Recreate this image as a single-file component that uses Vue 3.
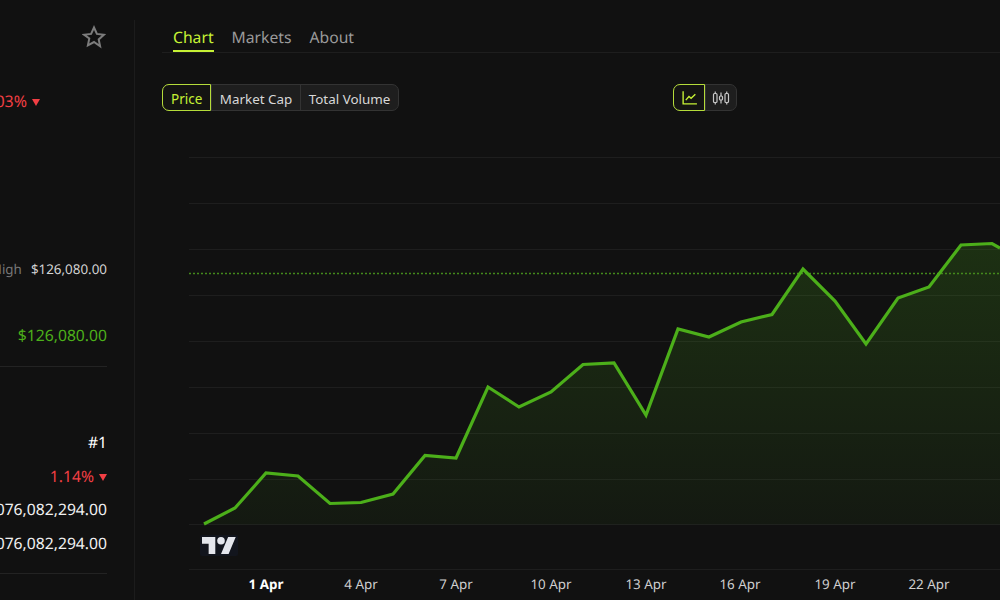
<template>
  <div class="page">
    <aside class="sidebar">
      <div class="star-row">
        <svg class="star" width="24" height="24" viewBox="0 0 24 24" fill="none" stroke="#7c7c7c" stroke-width="2" stroke-linejoin="miter">
          <path d="M12 2.500l2.900 6.400 7 .8-5.200 4.700 1.400 6.900L12 17l-6.100 3.300 1.400-6.900L2.100 9.700l7-.8z" />
        </svg>
      </div>
      <div class="change">-2.03%<span class="arrow"></span></div>
      <div class="stat high"><span class="dim">24h High</span><span>$126,080.00</span></div>
      <div class="ath">$126,080.00</div>
      <div class="divider first"></div>
      <div class="stat rank">#1</div>
      <div class="stat dominance">1.14%<span class="arrow"></span></div>
      <div class="stat cap">$2,076,082,294.00</div>
      <div class="stat cap second">$2,076,082,294.00</div>
      <div class="divider last"></div>
    </aside>

    <main class="main">
      <nav class="tabs">
        <a v-for="tab in tabs" :key="tab" class="tab" :class="{ active: tab === 'Chart' }">{{ tab }}</a>
      </nav>

      <div class="toolbar">
        <div class="group">
          <button v-for="m in metrics" :key="m" class="seg" :class="{ on: m === 'Price' }">{{ m }}</button>
        </div>
        <div class="group">
          <button class="seg icon on">
            <svg width="17" height="17" viewBox="0 0 16 16" fill="none" stroke="currentColor" stroke-width="1.300">
              <path d="M2 2v12h13" />
              <path d="M4.500 10.500l3-3.500 2 1.800 4-3.800" />
            </svg>
          </button>
          <button class="seg icon">
            <svg width="18" height="16" viewBox="0 0 18 16" fill="none" stroke="currentColor" stroke-width="1.200">
              <rect x="1.500" y="3.500" width="3.500" height="9" rx="1" />
              <path d="M3.250 1.500v2M3.250 12.500v2" />
              <rect x="7.500" y="6" width="3" height="4" rx="1" />
              <path d="M9 2.500V6M9 10v3.500" />
              <rect x="13" y="3.500" width="3.500" height="9" rx="1" />
              <path d="M14.750 1.500v2M14.750 12.500v2" />
            </svg>
          </button>
        </div>
      </div>

      <svg class="chart" viewBox="135 130 865 470" width="865" height="470">
        <defs>
          <linearGradient id="area" x1="0" y1="243" x2="0" y2="525" gradientUnits="userSpaceOnUse">
            <stop offset="0" stop-color="#4caf1a" stop-opacity="0.2" />
            <stop offset="1" stop-color="#4caf1a" stop-opacity="0.05" />
          </linearGradient>
        </defs>
        <line v-for="y in grid" :key="y" x1="189" x2="1000" :y1="y" :y2="y" class="grid" />
        <path :d="areaPath" fill="url(#area)" />
        <line x1="189" x2="1000" y1="273.500" y2="273.500" class="last-price" />
        <polyline :points="linePoints" class="line" />
        <rect x="200" y="535" width="38" height="21" rx="2" fill="#131722" opacity="0.7" />
        <g transform="translate(202 533.200) scale(0.950)" fill="#e4e6ec">
          <path d="M14 22H7V11H0V4h14v18zM28 22h-8l7.500-18h8L28 22z" />
          <circle cx="20" cy="8" r="4" />
        </g>
        <text v-for="t in ticks" :key="t.label" :x="t.x" y="588.500" text-anchor="middle" class="tick" :class="{ major: t.major }">{{ t.label }}</text>
      </svg>
    </main>
  </div>
</template>

<script setup>
const tabs = ['Chart', 'Markets', 'About']
const metrics = ['Price', 'Market Cap', 'Total Volume']

const grid = [157.5, 203.5, 249.5, 295.5, 341.5, 387.5, 433.5, 479.5, 524.5, 569.5]

const points = [
  [204, 524], [235, 508], [266, 473], [298, 476], [330, 503.5], [361, 502.5],
  [393, 494], [425, 455.5], [456, 458], [488, 387], [519, 407], [551, 392],
  [583, 364.5], [614, 363], [646, 415], [678, 329], [709, 337], [741, 322],
  [772, 314.5], [803, 269], [835, 301], [866, 344], [898, 298], [929, 287],
  [961, 245], [992, 243.5], [1000, 248],
]
const linePoints = points.map((p) => p.join(',')).join(' ')
const areaPath = `M204,524 L${linePoints.replaceAll(' ', ' L')} L1000,524.5 L204,524.5 Z`

const ticks = [
  { label: '1 Apr', x: 266, major: true },
  { label: '4 Apr', x: 361 },
  { label: '7 Apr', x: 456 },
  { label: '10 Apr', x: 551 },
  { label: '13 Apr', x: 646 },
  { label: '16 Apr', x: 740 },
  { label: '19 Apr', x: 835 },
  { label: '22 Apr', x: 929 },
]
</script>

<style>
html,
body {
  margin: 0;
  background: #111111;
}
</style>

<style scoped>
.page {
  display: flex;
  width: 1000px;
  height: 600px;
  overflow: hidden;
  background: #111111;
  color: #e6e6e6;
  font-family: "Noto Sans", sans-serif;
  text-rendering: geometricPrecision;
}

.sidebar {
  position: relative;
  display: flex;
  flex-direction: column;
  align-items: flex-end;
  flex: 0 0 135px;
  width: 135px;
  box-sizing: border-box;
  margin-top: 20px;
  padding-right: 27px;
  border-right: 1px solid #1c1c1c;
  white-space: nowrap;
}

.star-row {
  height: 24px;
  margin: 5px 1px 0 0;
}

.change {
  display: flex;
  align-items: center;
  margin: 41px 67px 0 0;
  font-size: 16px;
  line-height: 22px;
  color: #f23f44;
}

.arrow {
  width: 0;
  height: 0;
  margin: 2px 0 0 5px;
  border-left: 4px solid transparent;
  border-right: 4px solid transparent;
  border-top: 7px solid currentColor;
}

.stat {
  font-size: 15.7px;
  line-height: 22px;
}

.high {
  display: flex;
  gap: 9px;
  margin-top: 146px;
  font-size: 13.4px;
  color: #d4d4d4;
}

.dim {
  color: #777777;
}

.ath {
  margin-top: 44px;
  font-size: 15.7px;
  line-height: 22px;
  color: #4caf1a;
}

.divider {
  align-self: stretch;
  height: 1px;
  margin-left: -30px;
  background: #232323;
}

.divider.first {
  margin-top: 20px;
}

.rank {
  margin-top: 64px;
  color: #ffffff;
}

.dominance {
  display: flex;
  align-items: center;
  margin-top: 12px;
  color: #f23f44;
}

.cap {
  margin-top: 11px;
  color: #f0f0f0;
}

.cap.second {
  margin-top: 12px;
}

.divider.last {
  margin-top: 19px;
}

.main {
  display: flex;
  flex-direction: column;
  flex: 1;
  min-width: 0;
}

.tabs {
  display: flex;
  gap: 18px;
  height: 53px;
  box-sizing: border-box;
  margin-left: 27px;
  padding: 24px 0 0 11px;
  border-bottom: 1px solid #1e1e1e;
}

.tab {
  height: 28px;
  box-sizing: border-box;
  font-size: 15.7px;
  line-height: 26px;
  color: #9a9a9a;
}

.tab.active {
  color: #c6f135;
  border-bottom: 2px solid #c6f135;
}

.toolbar {
  display: flex;
  gap: 274px;
  height: 27px;
  margin: 31px 0 19px 27px;
}

.group {
  display: flex;
  border: 1px solid #333333;
  border-radius: 7px;
  background: #1e1e1e;
  box-sizing: border-box;
}

.seg {
  position: relative;
  height: 25px;
  padding: 3px 8px 0 7.5px;
  border: 0;
  border-left: 1px solid #333333;
  background: transparent;
  color: #d8d8d8;
  font-family: inherit;
  font-size: 13.4px;
  line-height: 22px;
}

.seg:first-child {
  border-left: 0;
}

.seg.on {
  margin: -1px 0 -1px -1px;
  height: 27px;
  padding: 3px 8px 0;
  border: 1px solid #b5dc3a;
  border-radius: 7px 0 0 7px;
  background: #141412;
  color: #c6f135;
  font-size: 13.5px;
}

.seg.icon {
  display: flex;
  align-items: center;
  justify-content: center;
  width: 31.5px;
  padding: 0;
  color: #c8c8c8;
}

.seg.icon.on {
  color: #c6f135;
}

.chart {
  display: block;
  flex: none;
}

.grid {
  stroke: #1e1e1e;
  stroke-width: 1;
}

.last-price {
  stroke: #448a1c;
  stroke-width: 1.4;
  stroke-dasharray: 2 2;
}

.line {
  fill: none;
  stroke: #4caf1a;
  stroke-width: 3.2;
  stroke-linejoin: miter;
}

.tick {
  fill: #cfcfcf;
  font-size: 13.4px;
}

.tick.major {
  fill: #ffffff;
  font-weight: 700;
}
</style>
